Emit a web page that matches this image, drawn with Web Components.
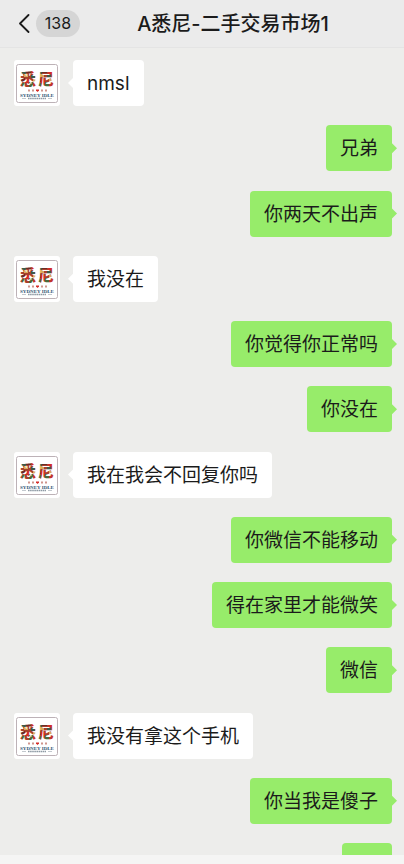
<!DOCTYPE html>
<html lang="zh-CN">
<head>
<meta charset="utf-8">
<meta name="viewport" content="width=device-width, initial-scale=1">
<title>A悉尼-二手交易市场1</title>
<style>
    body {
        margin: 0;
        background-color: #ededeb;
        color: #1b1b1b;
        font-family: Inter, "Noto Sans CJK SC", sans-serif;
    }
</style>
</head>
<body>

<chat-screen>
    <chat-header slot="header" unread="138">A悉尼-二手交易市场1</chat-header>
    <chat-message>nmsl</chat-message>
    <chat-message mine>兄弟</chat-message>
    <chat-message mine>你两天不出声</chat-message>
    <chat-message>我没在</chat-message>
    <chat-message mine>你觉得你正常吗</chat-message>
    <chat-message mine>你没在</chat-message>
    <chat-message>我在我会不回复你吗</chat-message>
    <chat-message mine>你微信不能移动</chat-message>
    <chat-message mine>得在家里才能微笑</chat-message>
    <chat-message mine>微信</chat-message>
    <chat-message>我没有拿这个手机</chat-message>
    <chat-message mine>你当我是傻子</chat-message>
    <chat-message mine></chat-message>
</chat-screen>

<script>
const screenTemplate = document.createElement('template');
screenTemplate.innerHTML = `
<style>
    :host {
        display: flex;
        flex-direction: column;
        height: 100vh;
        overflow: hidden;
    }

    main {
        flex: 1;
        min-height: 0;
        display: flex;
        flex-direction: column;
        justify-content: space-between;
        padding: 12px 12px 0 14px;
        /* the newest message runs on under the input bar */
        margin-bottom: -34px;
    }

    footer {
        z-index: 1;
        height: 9px;
        flex: none;
        background-color: #f5f5f4;
    }
</style>

<slot name="header"></slot>
<main><slot></slot></main>
<footer></footer>`;

class ChatScreen extends HTMLElement {
    constructor() {
        super();
        this.attachShadow({mode: 'open'}).appendChild(screenTemplate.content.cloneNode(true));
    }
}


const headerTemplate = document.createElement('template');
headerTemplate.innerHTML = `
<style>
    :host {
        display: block;
        flex: none;
    }

    header {
        display: flex;
        align-items: center;
        height: 47px;
        padding: 0 18px;
        background-color: #ebebeb;
        border-bottom: 1px solid #e4e4e4;
    }

    button {
        display: flex;
        align-items: center;
        gap: 6px;
        padding: 0;
        border: 0;
        background: none;
        color: inherit;
        font: inherit;
    }

    .unread {
        box-sizing: border-box;
        min-width: 44px;
        padding: 0 8px;
        border-radius: 14px;
        background-color: #d5d5d5;
        font-size: 16px;
        line-height: 27px;
        text-align: center;
    }

    h1 {
        flex: 1;
        margin: 0;
        font-size: 20px;
        font-weight: 500;
        line-height: 28px;
        text-align: center;
        white-space: nowrap;
    }
</style>

<header>
    <button type="button" aria-label="返回">
        <svg width="12" height="20" viewBox="0 0 12 20" fill="none" stroke="#1b1b1b" stroke-width="1.800" stroke-linecap="round" stroke-linejoin="round">
            <path d="M10.500 1 2 9.500l8.500 8.500"/>
        </svg>
        <span class="unread"></span>
    </button>
    <h1><slot></slot></h1>
</header>`;

class ChatHeader extends HTMLElement {
    constructor() {
        super();
        this.attachShadow({mode: 'open'}).appendChild(headerTemplate.content.cloneNode(true));
    }

    connectedCallback() {
        this.shadowRoot.querySelector('.unread').textContent = this.getAttribute('unread');
    }
}


const avatarTemplate = document.createElement('template');
avatarTemplate.innerHTML = `
<style>
    :host {
        display: block;
        width: 46px;
        height: 46px;
    }

    svg {
        display: block;
    }
</style>

<svg width="46" height="46" viewBox="0 0 46 46" role="img" aria-label="悉尼 SYDNEY IDLE">
    <defs>
        <!-- coloured patches that fill the two large characters -->
        <pattern id="patches" width="16" height="17" patternUnits="userSpaceOnUse" x="7" y="10">
            <rect width="16" height="17" fill="#a8402c"/>
            <path d="M0 0h5v4H0zM10 5h4v3h-4z" fill="#3f5a48"/>
            <path d="M5 0h5v3H5zM0 8h4v4H0z" fill="#6c2c25"/>
            <path d="M11 0h5v4h-5zM4 9h4v4H4z" fill="#d22d26"/>
            <path d="M3 4h4v3H3zM12 9h4v3h-4z" fill="#d9a95c"/>
            <path d="M8 12h4v5H8zM1 13h3v3H1z" fill="#4b6a3c"/>
            <path d="M12 13h4v4h-4z" fill="#c2352a"/>
        </pattern>
    </defs>
    <rect width="46" height="46" rx="3" fill="#fff"/>
    <rect x="2.500" y="4.500" width="41" height="38" rx="2" fill="none" stroke="#bdb2b7"/>
    <g fill="url(#patches)" font-family="Noto Sans CJK SC, sans-serif" font-weight="900" font-size="16">
        <text x="6" y="25">悉</text>
        <text x="24" y="25">尼</text>
    </g>
    <g fill="#d0958c">
        <path d="M14 29.500h2v2h-2zM18 29.500h2v2h-2zM27 29.500h2v2h-2zM31 29.500h2v2h-2z"/>
        <path d="M22 29.500h3v1L23.500 32 22 30.500z" fill="#d62f2a"/>
    </g>
    <text x="23" y="37" fill="#2d5472" font-family="Liberation Serif, serif" font-weight="700" font-size="5" text-anchor="middle">SYDNEY IDLE</text>
    <path d="M8 38.500h4M34 38.500h4" stroke="#9aa5ad" stroke-width=".6"/>
    <path d="M14 38.500h18" stroke="#8e9aa4" stroke-width="1.300" stroke-dasharray="1.600 .5"/>
</svg>`;

class ChatAvatar extends HTMLElement {
    constructor() {
        super();
        this.attachShadow({mode: 'open'}).appendChild(avatarTemplate.content.cloneNode(true));
    }
}


const messageTemplate = document.createElement('template');
messageTemplate.innerHTML = `
<style>
    :host {
        --bubble: #fff;
        display: flex;
        flex: none;
        gap: 13px;
    }

    :host([mine]) {
        --bubble: #97ec6a;
        justify-content: flex-end;
    }

    :host([mine]) chat-avatar {
        display: none;
    }

    .bubble {
        position: relative;
        box-sizing: border-box;
        min-width: 50px;
        min-height: 46px;
        padding: 10px 14px 8px;
        border-radius: 4px;
        background-color: var(--bubble);
        font-size: 19px;
        line-height: 28px;
    }

    /* tail */
    .bubble::before {
        content: "";
        position: absolute;
        top: 17px;
        left: -5px;
        width: 6px;
        height: 12px;
        background-color: var(--bubble);
        clip-path: polygon(100% 0, 0 50%, 100% 100%);
    }

    :host([mine]) .bubble::before {
        left: auto;
        right: -5px;
        clip-path: polygon(0 0, 100% 50%, 0 100%);
    }
</style>

<chat-avatar></chat-avatar>
<div class="bubble"><slot></slot></div>`;

class ChatMessage extends HTMLElement {
    constructor() {
        super();
        this.attachShadow({mode: 'open'}).appendChild(messageTemplate.content.cloneNode(true));
    }
}

customElements.define('chat-screen', ChatScreen);
customElements.define('chat-header', ChatHeader);
customElements.define('chat-avatar', ChatAvatar);
customElements.define('chat-message', ChatMessage);
</script>
</body>
</html>
